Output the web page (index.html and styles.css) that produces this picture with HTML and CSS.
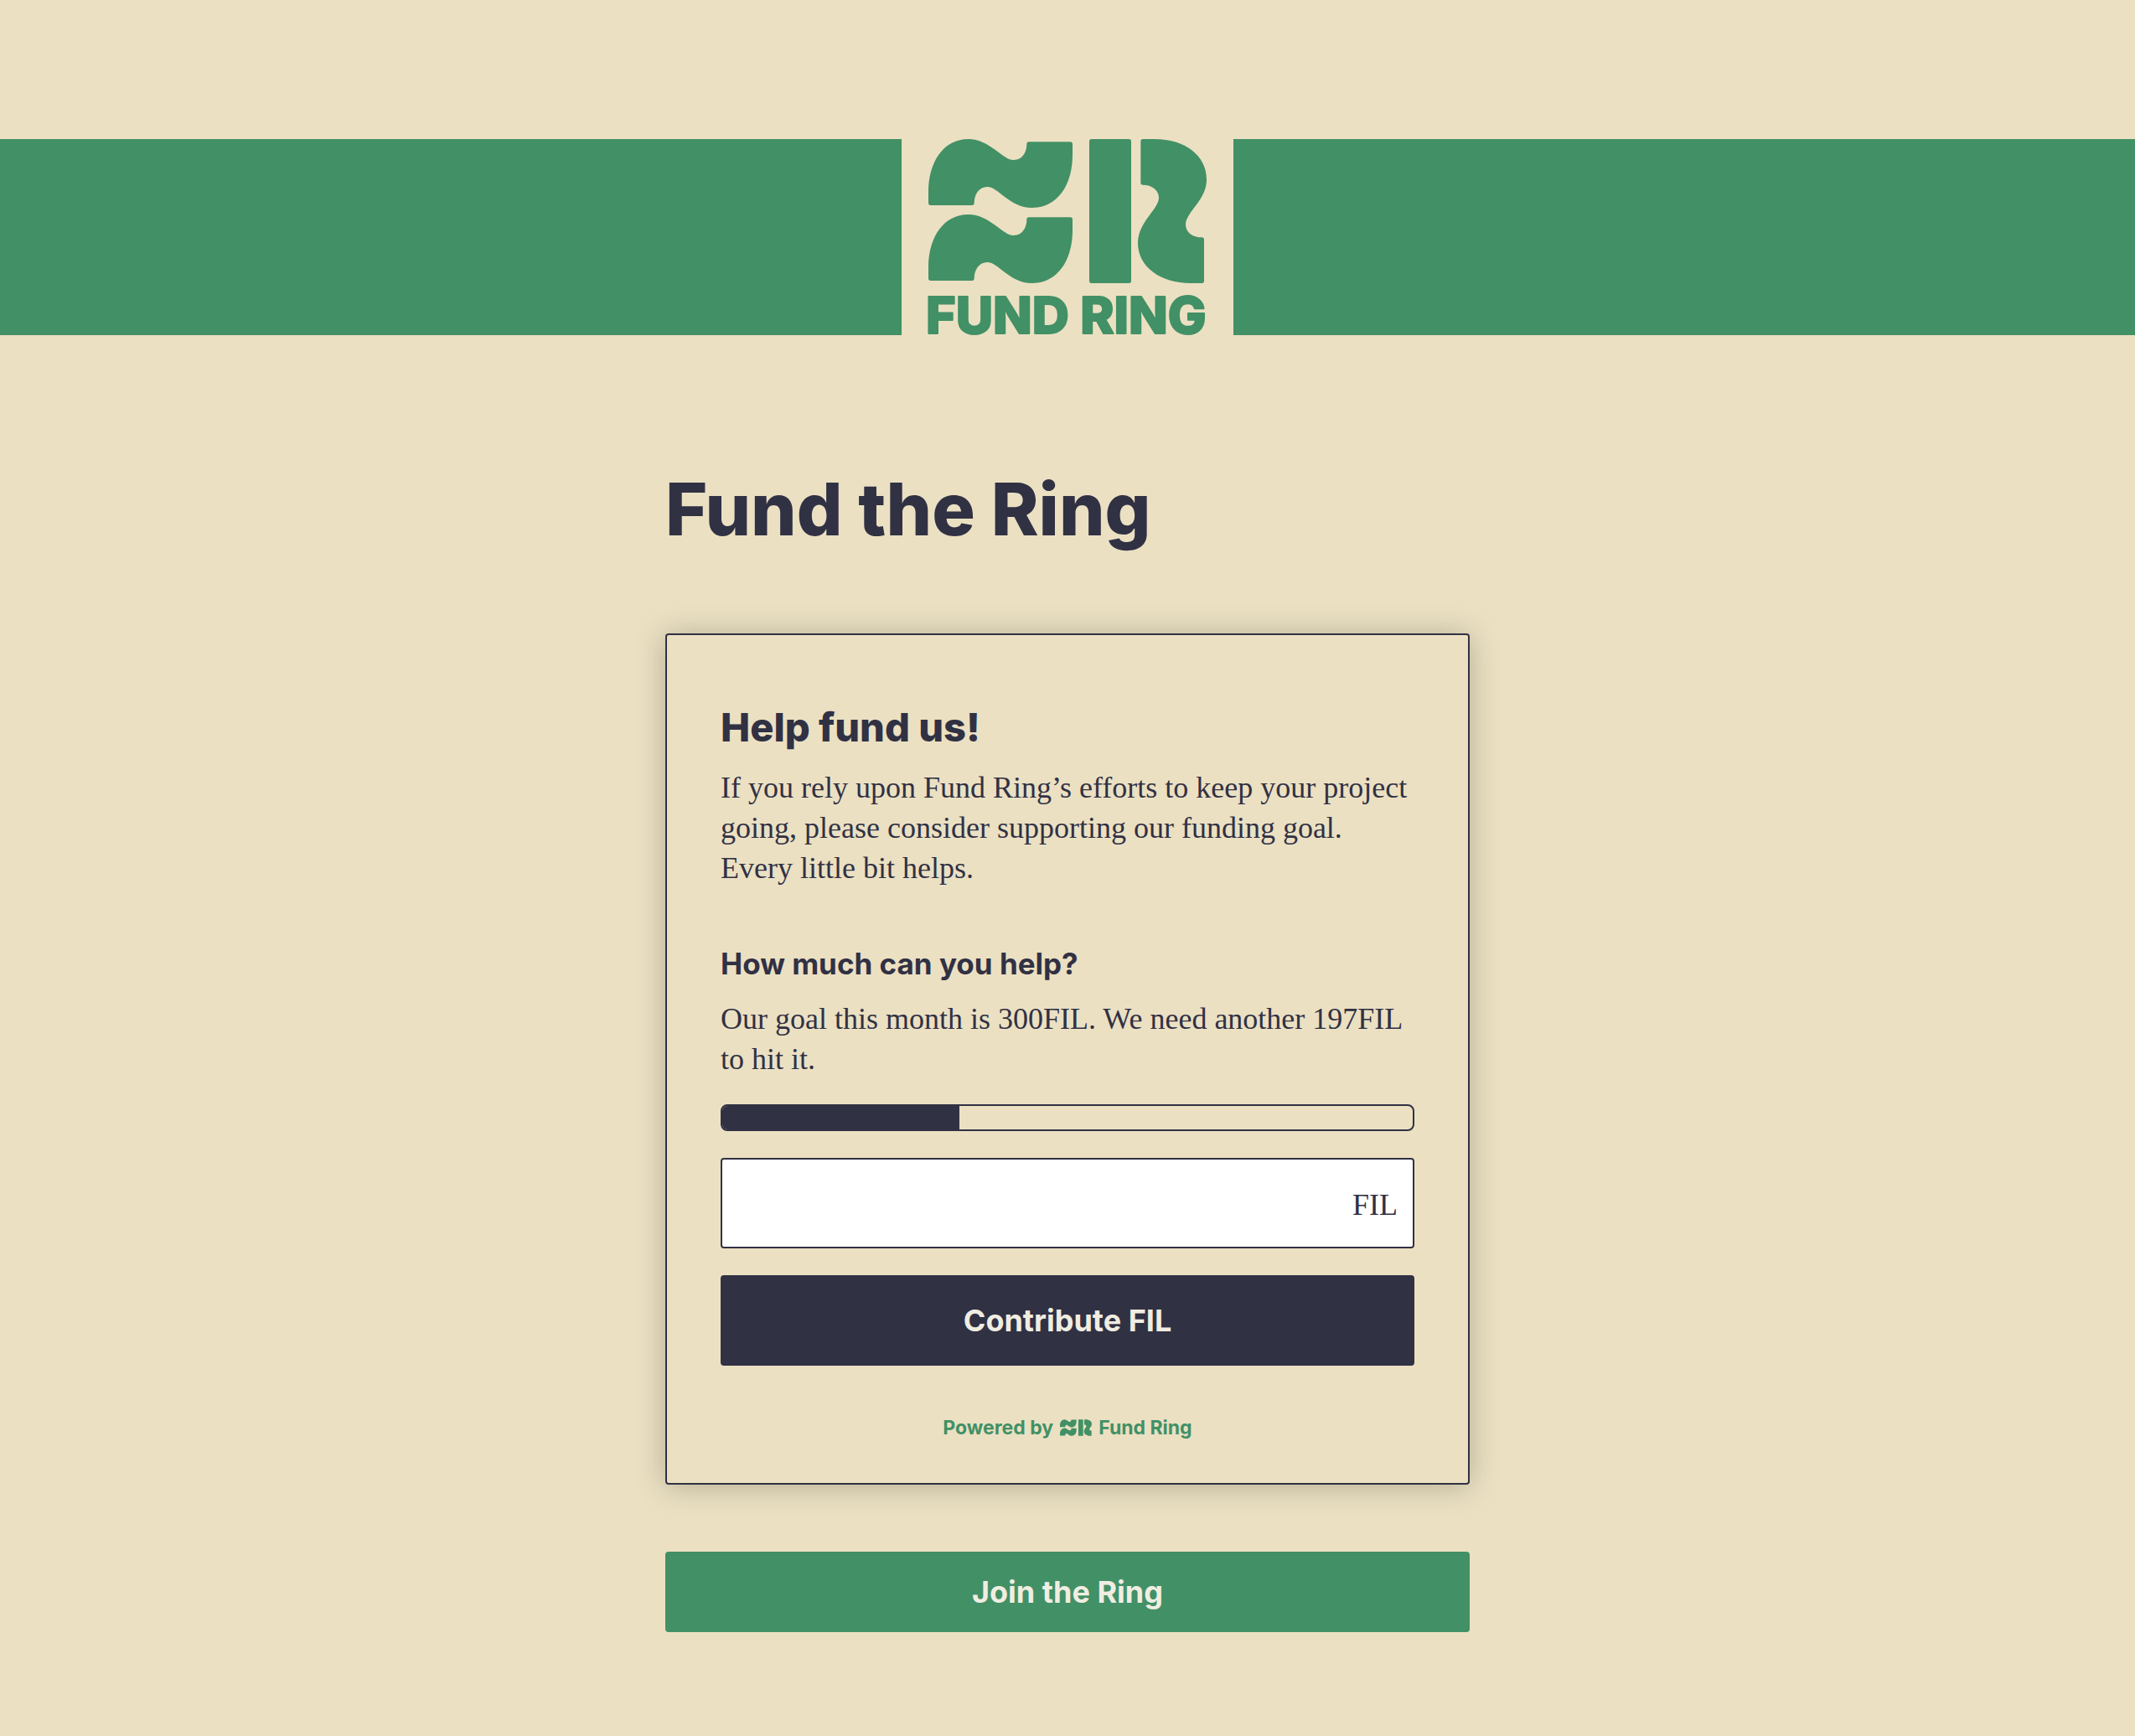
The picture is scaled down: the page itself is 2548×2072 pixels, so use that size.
FILE: index.html
```html
<!DOCTYPE html>
<html lang="en">
<head>
<meta charset="utf-8">
<meta name="viewport" content="width=device-width, initial-scale=1">
<title>Fund Ring</title>
<link rel="stylesheet" href="styles.css">
</head>
<body>
<svg class="defs" width="0" height="0" aria-hidden="true">
  <symbol id="mark" viewBox="0 0 996 516">
    <path id="wave" d="M0 190C0 80 55 0 143 0C220 0 265 75 305 75C335 75 352 48 352 18Q352 10 360 10H508Q516 10 516 18V56C516 166 461 246 371 246C290 246 251 171 211 171C181 171 164 198 164 229Q164 237 156 237H8Q0 237 0 229Z"/>
    <use href="#wave" y="270"/>
    <rect x="576" width="150" height="516" rx="8"/>
    <path d="M768 0H810C920 0 996 60 996 145C996 220 921 263 921 305C921 334 946 352 979 352Q987 352 987 360V508Q987 516 979 516H940C830 516 750 457 750 372C750 296 825 252 825 210C825 182 800 164 768 164Q760 164 760 156V8Q760 0 768 0Z"/>
  </symbol>
</svg>

<header class="banner">
  <a class="logo" href="#" aria-label="Fund Ring">
    <svg class="logo-art" viewBox="0 0 332 234">
      <use href="#mark" width="332" height="172"/>
      <text class="wordmark" x="-3" y="232">FUND RING</text>
    </svg>
  </a>
</header>

<main class="page">
  <h1 class="title">Fund the Ring</h1>

  <form class="card">
    <h2 class="card-title">Help fund us!</h2>
    <p class="copy">If you rely upon Fund Ring’s efforts to keep your project going, please consider supporting our funding goal. Every little bit helps.</p>

    <h3 class="card-subtitle"><label for="amount">How much can you help?</label></h3>
    <p class="copy">Our goal this month is 300FIL. We need another 197FIL to hit it.</p>

    <div class="meter" role="progressbar" aria-label="Funding goal" aria-valuemin="0" aria-valuemax="300" aria-valuenow="103">
      <div class="meter-fill" style="width: 34.33%"></div>
    </div>

    <div class="field">
      <input class="field-input" id="amount" type="text" inputmode="decimal">
      <span class="field-unit">FIL</span>
    </div>

    <button class="button button-dark" type="submit">Contribute FIL</button>

    <a class="powered" href="#">
      <span>Powered by</span>
      <svg class="powered-mark" aria-hidden="true"><use href="#mark"/></svg>
      <span>Fund Ring</span>
    </a>
  </form>

  <button class="button button-green" type="button">Join the Ring</button>
</main>
</body>
</html>
```
FILE: styles.css
```css
:root {
  --cream: #ebe0c2;
  --green: #429066;
  --ink: #313144;
  --paper: #f0ede1;
  --sans: Inter, "Liberation Sans", sans-serif;
  --serif: "Liberation Serif", serif;
}

* {
  box-sizing: border-box;
}

body {
  margin: 0;
  background: var(--cream);
  color: var(--ink);
  font-family: var(--serif);
  font-size: 36px;
  line-height: 48px;
}

h1, h2, h3, p {
  margin: 0;
}

.defs {
  display: block;
}

.banner {
  display: flex;
  justify-content: center;
  margin-top: 166px;
  background: var(--green);
}

.logo {
  display: block;
  padding: 0 32px;
  background: var(--cream);
}

.logo-art {
  display: block;
  width: 332px;
  height: 234px;
  overflow: visible;
  fill: var(--green);
}

.wordmark {
  font-family: var(--sans);
  font-size: 61px;
  font-weight: 800;
  stroke: var(--green);
  stroke-width: 2px;
  stroke-linejoin: round;
}

.page {
  display: flex;
  flex-direction: column;
  max-width: 960px;
  margin: 0 auto;
  padding: 160px 0 124px;
}

.title {
  font-family: var(--sans);
  font-size: 86px;
  font-weight: 800;
  line-height: 96px;
}

.card {
  display: flex;
  flex-direction: column;
  margin: 100px 0 80px;
  padding: 78px 64px 50px;
  border: 2px solid var(--ink);
  border-radius: 4px;
  box-shadow: 0 2px 36px rgba(0, 0, 0, 0.24);
}

.card-title {
  margin-bottom: 16px;
  font-family: var(--sans);
  font-size: 47px;
  font-weight: 800;
  line-height: 64px;
}

.card-subtitle {
  margin: 66px 0 18px;
  font-family: var(--sans);
  font-size: 35px;
  font-weight: 700;
  line-height: 48px;
}

.meter {
  height: 32px;
  margin: 30px 0 32px;
  overflow: hidden;
  border: 2px solid var(--ink);
  border-radius: 8px;
}

.meter-fill {
  height: 100%;
  background: var(--ink);
}

.field {
  display: flex;
  align-items: center;
  height: 108px;
  margin-bottom: 32px;
  padding-right: 18px;
  background: #fff;
  border: 2px solid var(--ink);
  border-radius: 4px;
}

.field-input {
  flex: 1;
  min-width: 0;
  height: 100%;
  padding: 0 20px;
  border: 0;
  outline: 0;
  background: none;
  color: inherit;
  font: inherit;
}

.field-unit {
  padding-top: 4px;
}

.button {
  border: 0;
  border-radius: 4px;
  color: var(--paper);
  font-family: var(--sans);
  font-size: 36px;
  font-weight: 700;
  line-height: 48px;
}

.button-dark {
  padding: 30px;
  background: var(--ink);
}

.button-green {
  padding: 24px;
  background: var(--green);
}

.powered {
  display: flex;
  align-items: center;
  justify-content: center;
  gap: 8px;
  margin-top: 58px;
  color: var(--green);
  font-family: var(--sans);
  font-size: 23px;
  font-weight: 700;
  line-height: 32px;
  text-decoration: none;
}

.powered-mark {
  width: 38px;
  height: 20px;
  fill: currentColor;
}
```
